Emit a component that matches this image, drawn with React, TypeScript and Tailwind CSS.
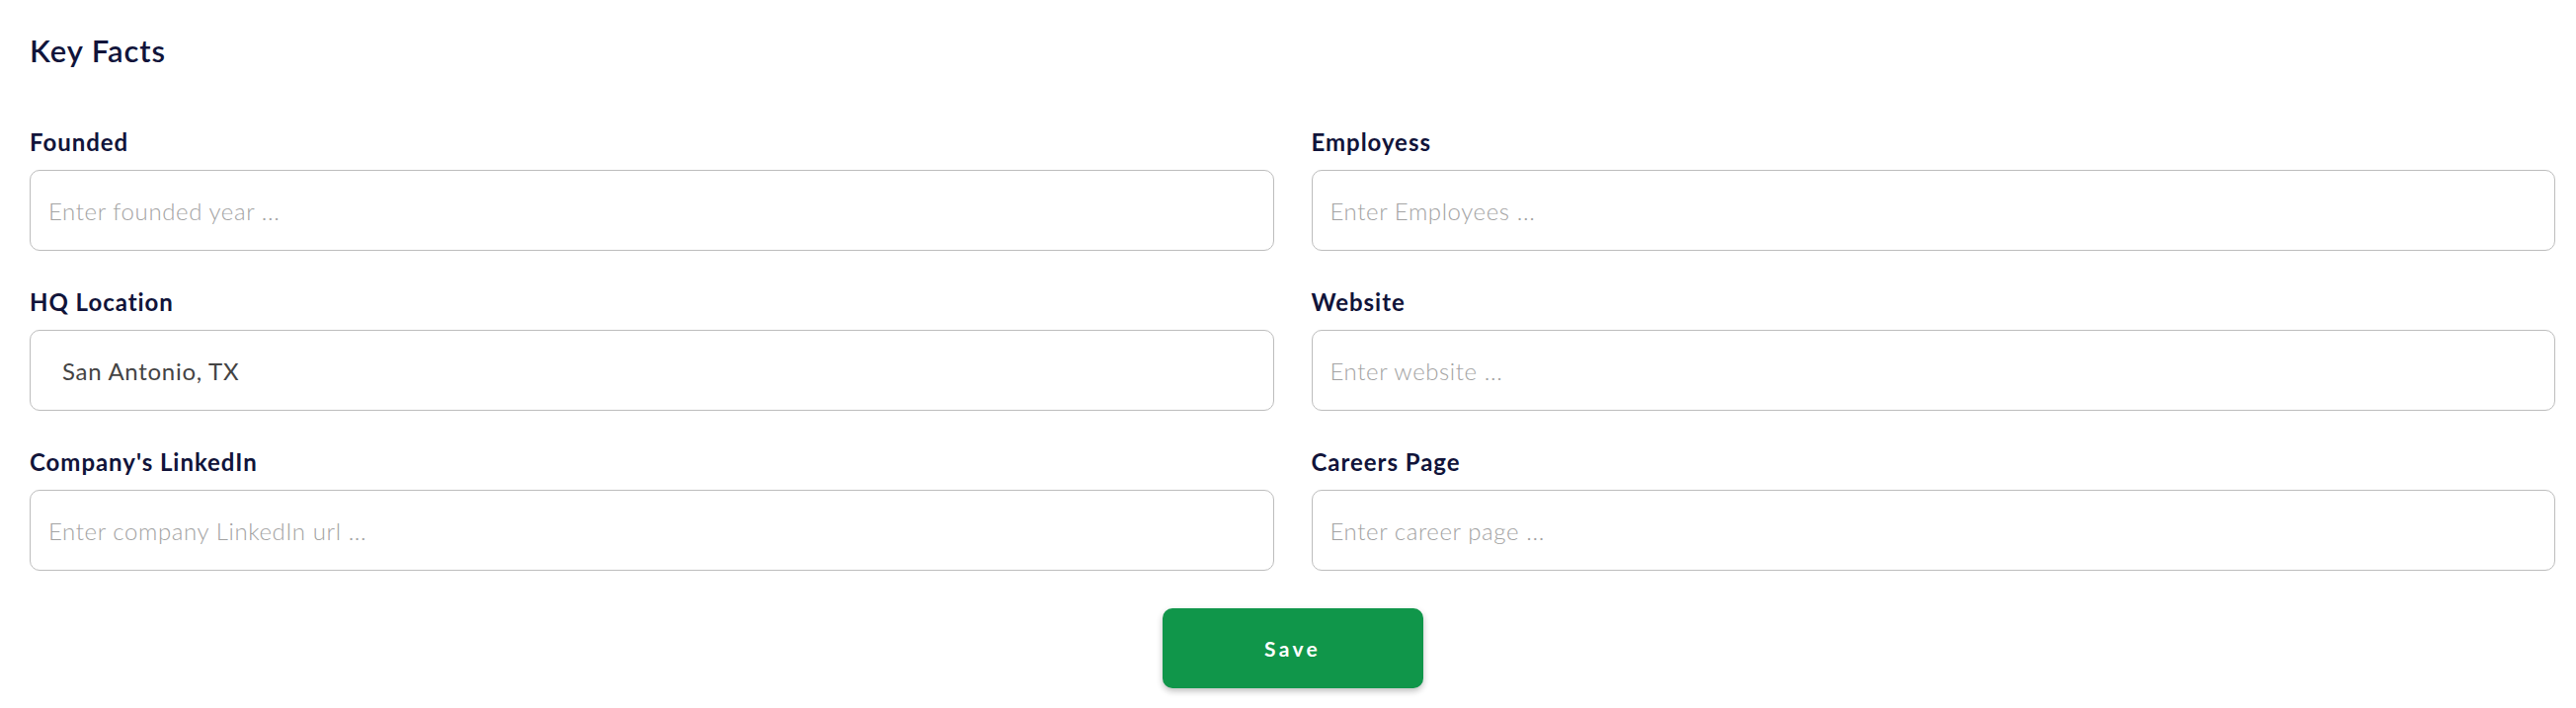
import React from "react";

const fields = [
  { label: "Founded", placeholder: "Enter founded year ...", value: "" },
  { label: "Employess", placeholder: "Enter Employees ...", value: "" },
  { label: "HQ Location", placeholder: "Enter HQ location ...", value: "San Antonio, TX" },
  { label: "Website", placeholder: "Enter website ...", value: "" },
  { label: "Company's LinkedIn", placeholder: "Enter company LinkedIn url ...", value: "" },
  { label: "Careers Page", placeholder: "Enter career page ...", value: "" },
];

export default function App() {
  return (
    <div
      className="min-h-[717px] bg-white pl-[30px] pr-[21px] pt-[35px]"
      style={{ fontFamily: "Lato, 'Noto Sans', sans-serif" }}
    >
      <h2 className="text-[31px] leading-[32px] font-semibold tracking-[0.03em] text-[#11143a]">Key Facts</h2>
      <div className="mt-[65px] grid grid-cols-2 gap-x-[38px] gap-y-[40px]">
        {fields.map((f) => (
          <div key={f.label} className="flex flex-col">
            <label className="text-[24px] leading-[24px] font-bold tracking-[0.04em] text-[#11143a]">{f.label}</label>
            <input
              type="text"
              defaultValue={f.value}
              placeholder={f.placeholder}
              className={
                f.value
                  ? "mt-[16px] h-[82px] w-full rounded-[10px] border border-[#bdbdbd] bg-white pl-[32px] pr-[18px] text-[24px] font-normal tracking-[0.03em] text-[#444444] outline-none placeholder:text-[#a3a3a3] placeholder:font-light"
                  : "mt-[16px] h-[82px] w-full rounded-[10px] border border-[#bdbdbd] bg-white pl-[18px] pr-[18px] text-[24px] font-light tracking-[0.025em] text-[#444444] outline-none placeholder:text-[#a3a3a3] placeholder:font-light"
              }
            />
          </div>
        ))}
      </div>
      <div className="mt-[38px] flex justify-center">
        <button
          type="button"
          className="h-[81px] w-[264px] rounded-[10px] bg-[#10964a] text-[21px] font-bold tracking-[0.16em] text-white shadow-[0_3px_6px_rgba(0,0,0,0.25)]"
        >
          Save
        </button>
      </div>
    </div>
  );
}
